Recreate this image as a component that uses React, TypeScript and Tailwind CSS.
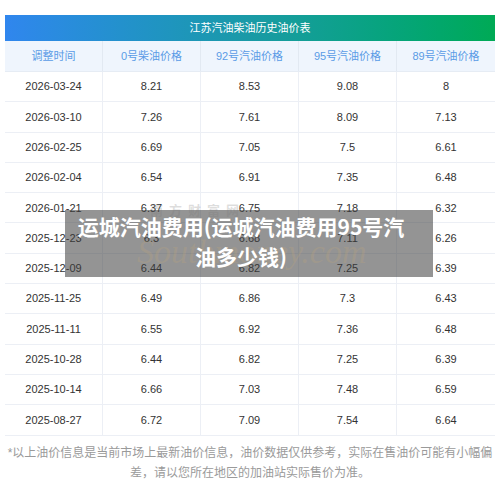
import React from "react";

const rows: string[][] = [
  ["2026-03-24", "8.21", "8.53", "9.08", "8"],
  ["2026-03-10", "7.26", "7.61", "8.09", "7.13"],
  ["2026-02-25", "6.69", "7.05", "7.5", "6.61"],
  ["2026-02-04", "6.54", "6.91", "7.35", "6.48"],
  ["2026-01-21", "6.37", "6.75", "7.18", "6.32"],
  ["2025-12-23", "6.3", "6.68", "7.11", "6.26"],
  ["2025-12-09", "6.44", "6.82", "7.25", "6.39"],
  ["2025-11-25", "6.49", "6.86", "7.3", "6.43"],
  ["2025-11-11", "6.55", "6.92", "7.36", "6.48"],
  ["2025-10-28", "6.44", "6.82", "7.25", "6.39"],
  ["2025-10-14", "6.66", "7.03", "7.48", "6.59"],
  ["2025-08-27", "6.72", "7.09", "7.54", "6.64"],
];

const heads = ["调整时间", "0号柴油价格", "92号汽油价格", "95号汽油价格", "89号汽油价格"];

export default function App() {
  return (
    <div className="relative w-[500px] h-[488px] overflow-hidden bg-white font-['Liberation_Sans','Noto_Sans_CJK_SC',sans-serif]">
      <div className="px-[5px] pt-[15px]">
        <div className="h-[26px] flex items-center justify-center bg-gradient-to-r from-[#3086ee] via-[#1a9aa6] to-[#00aa55] text-white text-[11px]">
          江苏汽油柴油历史油价表
        </div>
        <div className="grid grid-cols-5 h-[31px] bg-[#eff5fd] border-b border-[#e6ecf4]">
          {heads.map((h, i) => (
            <div
              key={h}
              className={`flex items-center justify-center text-[11px] text-[#5a9be6] ${i < 4 ? "border-r border-[#e2e9f2]" : ""}`}
            >
              {h}
            </div>
          ))}
        </div>
        {rows.map((r) => (
          <div key={r[0]} className="grid grid-cols-5 h-[30.3px] border-b border-[#eceff5]">
            {r.map((c, i) => (
              <div
                key={i}
                className={`flex items-center justify-center text-[11px] text-[#333] ${i < 4 ? "border-r border-[#eceff5]" : ""}`}
              >
                {c}
              </div>
            ))}
          </div>
        ))}
      </div>
      <div className="mt-[7px] px-[6px] text-center text-[12px] leading-[20px] text-[#9a9a9a]">
        *以上油价信息是当前市场上最新油价信息，油价数据仅供参考，实际在售油价可能有小幅偏差，请以您所在地区的加油站实际售价为准。
      </div>

      <div className="absolute left-[65px] top-[210px] w-[368px] h-[67px] bg-[rgba(60,60,60,0.55)] pl-[10px] pr-[26px] pt-[1px] text-center text-white text-[21px] leading-[30px] font-bold font-['Noto_Sans_CJK_SC',sans-serif]">
        <div className="absolute left-[85px] top-[-8px] text-[13px] leading-[16px] tracking-[6px] text-[rgba(120,120,120,0.25)]">
          南方财富网
        </div>
        <div className="absolute left-[72px] top-[22px] text-[34px] leading-[40px] italic font-normal text-[rgba(200,170,120,0.22)] font-['Liberation_Serif',serif]">
          Southmoney.com
        </div>
        <div className="relative">
          运城汽油费用(运城汽油费用95号汽
          <br />
          油多少钱)
        </div>
      </div>
    </div>
  );
}
